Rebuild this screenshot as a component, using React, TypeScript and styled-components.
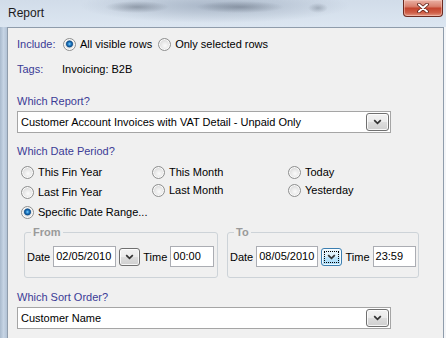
import React from 'react'
import styled, { createGlobalStyle } from 'styled-components'

const GlobalStyle = createGlobalStyle`
  html, body {
    margin: 0;
    padding: 0;
  }
  body {
    font-family: "Liberation Sans", Arial, sans-serif;
    font-size: 11px;
    color: #000;
  }
`

const Screen = styled.div`
  width: 446px;
  height: 338px;
  overflow: hidden;
  display: flex;
  flex-direction: column;
  background: #d9e3ee;
`

const TitleBar = styled.div`
  height: 27px;
  flex: none;
  display: flex;
  align-items: flex-start;
  justify-content: space-between;
  background:
    radial-gradient(ellipse 32px 6px at 137px 7px, rgba(70, 80, 95, 0.4), transparent),
    radial-gradient(ellipse 44px 6px at 240px 7px, rgba(70, 80, 95, 0.38), transparent),
    radial-gradient(ellipse 10px 5px at 318px 8px, rgba(70, 80, 95, 0.3), transparent),
    radial-gradient(ellipse 135px 17px at 215px 6px, rgba(140, 155, 175, 0.6), transparent),
    linear-gradient(#d1dce9, #dce6f1);
`

const Title = styled.div`
  font-size: 12px;
  line-height: 15px;
  color: #1b1b1b;
  padding: 6px 0 0 8px;
`

const CloseButton = styled.div`
  box-sizing: border-box;
  width: 40px;
  height: 17px;
  margin-right: 3px;
  display: flex;
  align-items: center;
  justify-content: center;
  border: 1px solid #6d2a20;
  border-top: none;
  border-radius: 0 0 4px 4px;
  background: linear-gradient(#eab0a4 0, #d9806e 40%, #c4452f 52%, #cf5f48 80%, #e39a86 100%);
  box-shadow: inset 0 0 0 1px rgba(255, 220, 210, 0.45);
`

const Body = styled.div`
  flex: 1;
  display: flex;
  min-height: 0;
`

const SideFrame = styled.div<{ $width: number; $tone: string }>`
  width: ${(p) => p.$width}px;
  flex: none;
  background: ${(p) => p.$tone};
`

const Panel = styled.div`
  flex: 1;
  background: #f0f0f0;
  border: 1px solid #8f9cab;
  border-bottom: none;
  padding: 8px 0 0 9px;
`

const Row = styled.div<{ $top?: number }>`
  display: flex;
  align-items: center;
  height: 16px;
  margin-top: ${(p) => p.$top ?? 0}px;
`

const Label = styled.span<{ $width?: number }>`
  color: #3b3b96;
  ${(p) => (p.$width ? `width: ${p.$width}px;` : '')}
  flex: none;
`

const Option = styled.label<{ $gap?: number }>`
  display: flex;
  align-items: center;
  gap: 4px;
  margin-right: ${(p) => p.$gap ?? 0}px;
  white-space: nowrap;
`

const Radio = styled.span<{ $checked?: boolean }>`
  box-sizing: border-box;
  width: 13px;
  height: 13px;
  flex: none;
  border-radius: 50%;
  border: 1px solid #8e8f8f;
  box-shadow: inset 0 0 0 1px #fbfbfb;
  background: ${(p) =>
    p.$checked
      ? 'radial-gradient(circle at 50% 45%, #8fd8f8 0, #2b8bd6 1.3px, #0f4f8c 2.8px, #3b74a8 3.3px, #d8d8d8 3.8px, #f6f6f6 5.5px)'
      : 'radial-gradient(circle at 55% 60%, #fbfbfb 0, #e9e9e9 40%, #cfcfcf 85%)'};
`

const SectionLabel = styled.div<{ $top: number }>`
  color: #3b3b96;
  height: 16px;
  line-height: 16px;
  margin-top: ${(p) => p.$top}px;
`

const Select = styled.div<{ $top?: number }>`
  box-sizing: border-box;
  width: 374px;
  height: 22px;
  margin-top: ${(p) => p.$top ?? 2}px;
  display: flex;
  align-items: center;
  justify-content: space-between;
  padding: 0 1px 0 3px;
  background: #fff;
  border: 1px solid #a5a5a5;
`

const DropButton = styled.span<{ $width: number; $hot?: boolean }>`
  box-sizing: border-box;
  width: ${(p) => p.$width}px;
  height: 18px;
  flex: none;
  display: flex;
  align-items: center;
  justify-content: center;
  border-radius: 3px;
  border: 1px solid ${(p) => (p.$hot ? '#3c7fb1' : '#707070')};
  background: ${(p) =>
    p.$hot
      ? 'linear-gradient(#eaf6fd 0, #d9f0fc 50%, #bee6fd 50%, #a7d9f5 100%)'
      : 'linear-gradient(#f2f2f2 0, #ebebeb 50%, #dddddd 50%, #cfcfcf 100%)'};
  box-shadow: inset 0 0 0 1px rgba(255, 255, 255, 0.8);
  ${(p) => (p.$hot ? 'outline: 1px dotted #000; outline-offset: -4px;' : '')}
`

const PeriodGrid = styled.div`
  display: grid;
  grid-template-columns: 131px 136px 1fr;
  grid-template-rows: 18px 18px 22px;
  margin: 4px 0 0 4px;
`

const PeriodOption = styled.label<{ $drop?: number; $wide?: boolean; $bottom?: boolean }>`
  display: flex;
  align-items: center;
  gap: 4px;
  height: 18px;
  margin-top: ${(p) => p.$drop ?? 0}px;
  white-space: nowrap;
  ${(p) => (p.$wide ? 'grid-column: 1 / -1;' : '')}
  ${(p) => (p.$bottom ? 'align-self: end;' : '')}
`

const Groups = styled.div`
  display: flex;
  gap: 9px;
  margin: 5px 0 0 7px;
`

const Group = styled.fieldset<{ $width: number }>`
  box-sizing: border-box;
  width: ${(p) => p.$width}px;
  margin: 0;
  padding: 7px 2px 10px 2px;
  border: 1px solid #cdd3d8;
  border-radius: 3px;
  min-width: 0;
`

const Legend = styled.legend`
  font-weight: bold;
  color: #9a9a9a;
  line-height: 13px;
  padding: 0 2px;
  margin-left: 4px;
`

const FieldRow = styled.div`
  display: flex;
  align-items: center;
  gap: 3px;
`

const Input = styled.div<{ $width: number }>`
  box-sizing: border-box;
  width: ${(p) => p.$width}px;
  height: 21px;
  line-height: 19px;
  padding: 0 2px;
  background: #fff;
  border: 1px solid #abadb3;
  white-space: nowrap;
`

const Chevron = () => (
  <svg width="9" height="6" viewBox="0 0 9 6">
    <path d="M1.2 1.2 L4.5 4.4 L7.8 1.2" fill="none" stroke="#333" strokeWidth="1.7" />
  </svg>
)

const CloseGlyph = () => (
  <svg width="12" height="10" viewBox="0 0 12 10">
    <path d="M2 1.5 L10 8.5 M10 1.5 L2 8.5" stroke="#5a1e16" strokeWidth="3.6" strokeLinecap="round" />
    <path d="M2 1.5 L10 8.5 M10 1.5 L2 8.5" stroke="#fff" strokeWidth="2" strokeLinecap="round" />
  </svg>
)

const DateGroup = ({ title, width, date, time, hot }: { title: string; width: number; date: string; time: string; hot?: boolean }) => (
  <Group $width={width}>
    <Legend>{title}</Legend>
    <FieldRow>
      <span>Date</span>
      <Input $width={63}>{date}</Input>
      <DropButton $width={21} $hot={hot}>
        <Chevron />
      </DropButton>
      <span>Time</span>
      <Input $width={44}>{time}</Input>
    </FieldRow>
  </Group>
)

export default function App() {
  return (
    <>
      <GlobalStyle />
      <Screen>
        <TitleBar>
          <Title>Report</Title>
          <CloseButton>
            <CloseGlyph />
          </CloseButton>
        </TitleBar>
        <Body>
          <SideFrame $width={7} $tone="linear-gradient(90deg, #a9bacd, #c6d4e4 50%, #b3c3d6)" />
          <Panel>
            <Row>
              <Label $width={46}>Include:</Label>
              <Option $gap={6}>
                <Radio $checked />
                All visible rows
              </Option>
              <Option>
                <Radio />
                Only selected rows
              </Option>
            </Row>
            <Row $top={9}>
              <Label $width={45}>Tags:</Label>
              <span>Invoicing: B2B</span>
            </Row>

            <SectionLabel $top={16}>Which Report?</SectionLabel>
            <Select>
              <span>Customer Account Invoices with VAT Detail - Unpaid Only</span>
              <DropButton $width={23}>
                <Chevron />
              </DropButton>
            </Select>

            <SectionLabel $top={10}>Which Date Period?</SectionLabel>
            <PeriodGrid>
              <PeriodOption>
                <Radio />
                This Fin Year
              </PeriodOption>
              <PeriodOption>
                <Radio />
                This Month
              </PeriodOption>
              <PeriodOption>
                <Radio />
                Today
              </PeriodOption>
              <PeriodOption $drop={2}>
                <Radio />
                Last Fin Year
              </PeriodOption>
              <PeriodOption>
                <Radio />
                Last Month
              </PeriodOption>
              <PeriodOption>
                <Radio />
                Yesterday
              </PeriodOption>
              <PeriodOption $wide $bottom>
                <Radio $checked />
                Specific Date Range...
              </PeriodOption>
            </PeriodGrid>

            <Groups>
              <DateGroup title="From" width={194} date="02/05/2010" time="00:00" />
              <DateGroup title="To" width={192} date="08/05/2010" time="23:59" hot />
            </Groups>

            <SectionLabel $top={11}>Which Sort Order?</SectionLabel>
            <Select $top={2}>
              <span>Customer Name</span>
              <DropButton $width={23}>
                <Chevron />
              </DropButton>
            </Select>
          </Panel>
          <SideFrame $width={2} $tone="#f3f5f8" />
        </Body>
      </Screen>
    </>
  )
}
